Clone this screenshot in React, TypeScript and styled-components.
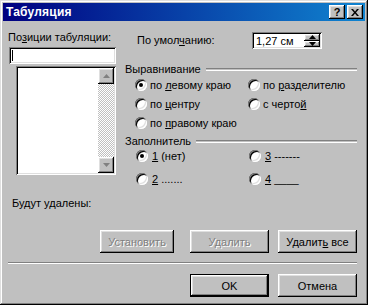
import React from 'react'
import styled, { createGlobalStyle } from 'styled-components'

const GlobalStyle = createGlobalStyle`
    html, body {
        margin: 0;
        padding: 0;
        background: #c0c0c0;
    }
    body {
        font-family: "Liberation Sans", Arial, sans-serif;
        font-size: 11px;
        color: #000;
    }
`

const raised = `
    box-shadow: inset -1px -1px 0 #000, inset 1px 1px 0 #fff, inset -2px -2px 0 #808080, inset 2px 2px 0 #dfdfdf;
`
const sunken = `
    box-shadow: inset 1px 1px 0 #808080, inset -1px -1px 0 #fff, inset 2px 2px 0 #000, inset -2px -2px 0 #dfdfdf;
`

const SWindow = styled.div`
    width: 368px;
    height: 305px;
    box-sizing: border-box;
    padding: 3px;
    background: #c0c0c0;
    box-shadow: inset -1px -1px 0 #000, inset 1px 1px 0 #dfdfdf, inset -2px -2px 0 #808080, inset 2px 2px 0 #fff;
    display: flex;
    flex-direction: column;
`

const STitleBar = styled.div`
    height: 18px;
    display: flex;
    align-items: center;
    padding: 0 2px 0 3px;
    background: linear-gradient(to right, #000080, #1084d0);
    color: #fff;
    font-weight: 700;
    font-size: 12px;
`

const STitleText = styled.div`
    flex: 1;
    letter-spacing: 0.2px;
`

const SCaptionButtons = styled.div`
    display: flex;
    gap: 2px;
`

const SCaptionButton = styled.div`
    width: 16px;
    height: 14px;
    background: #c0c0c0;
    ${raised}
    display: flex;
    align-items: center;
    justify-content: center;
    color: #000;
    font-size: 11px;
    font-weight: 700;
    line-height: 14px;
`

const SBody = styled.div`
    flex: 1;
    padding: 0 8px 0 5px;
    display: flex;
    flex-direction: column;
`

const STop = styled.div`
    display: flex;
    gap: 9px;
`

const SLeftCol = styled.div`
    width: 108px;
    display: flex;
    flex-direction: column;
`

const SLabel = styled.div`
    line-height: 13px;
    white-space: nowrap;
`

const STopLabel = styled(SLabel)`
    margin-top: 10px;
`

const STextField = styled.div`
    margin: 3px 0 0 1px;
    height: 17px;
    background: #fff;
    ${sunken}
    display: flex;
    align-items: center;
    padding-left: 3px;
`

const SCaret = styled.span`
    width: 1px;
    height: 11px;
    background: #000;
`

const SListBox = styled.div`
    margin: 2px 0 0 8px;
    height: 109px;
    background: #fff;
    ${sunken}
    box-sizing: border-box;
    padding: 2px;
    display: flex;
    justify-content: flex-end;
`

const SScrollBar = styled.div`
    width: 16px;
    display: flex;
    flex-direction: column;
    justify-content: space-between;
    background-color: #fff;
    background-image: conic-gradient(#c0c0c0 25%, #fff 25% 50%, #c0c0c0 50% 75%, #fff 75%);
    background-size: 2px 2px;
`

const SScrollButton = styled.div`
    width: 16px;
    height: 16px;
    background: #c0c0c0;
    ${raised}
    display: flex;
    align-items: center;
    justify-content: center;
`

const SRightCol = styled.div`
    flex: 1;
    display: flex;
    flex-direction: column;
`

const SDefaultRow = styled.div`
    margin-top: 11px;
    padding-left: 12px;
    display: grid;
    grid-template-columns: 115px 70px;
    align-items: center;
`

const SSpin = styled.div`
    height: 17px;
    background: #fff;
    ${sunken}
    display: flex;
    align-items: center;
    padding: 0 2px 0 4px;
`

const SSpinText = styled.span`
    flex: 1;
`

const SSpinButtons = styled.div`
    display: flex;
    flex-direction: column;
`

const SSpinButton = styled.div`
    width: 16px;
    height: 6.5px;
    background: #c0c0c0;
    ${raised}
    display: flex;
    align-items: center;
    justify-content: center;
`

const SLegend = styled.div<{ $top: number }>`
    margin-top: ${props => props.$top}px;
    display: flex;
    align-items: center;
    gap: 5px;
    line-height: 13px;
    &::after {
        content: '';
        flex: 1;
        height: 1px;
        border-top: 1px solid #808080;
        border-bottom: 1px solid #fff;
        margin-top: -1px;
    }
`

const SRadioGrid = styled.div<{ $gap: number; $indent: number }>`
    margin-top: ${props => props.$gap === 3 ? 1 : 0}px;
    padding-left: ${props => props.$indent}px;
    display: grid;
    grid-template-columns: 113px 1fr;
    row-gap: ${props => props.$gap}px;
`

const SRadioItem = styled.label`
    height: 16px;
    display: flex;
    align-items: center;
    gap: 3px;
    white-space: nowrap;
`

const SRadioCircle = styled.span<{ $checked?: boolean }>`
    width: 12px;
    height: 12px;
    border-radius: 50%;
    background: #fff;
    box-shadow: inset 1px 1px 0 #808080, inset -1px -1px 0 #fff, inset 2px 2px 0 #000, inset -2px -2px 0 #dfdfdf;
    flex: none;
    position: relative;
    &::after {
        content: '';
        display: ${props => props.$checked ? 'block' : 'none'};
        position: absolute;
        left: 4px;
        top: 4px;
        width: 4px;
        height: 4px;
        border-radius: 50%;
        background: #000;
    }
`

const SRadioText = styled.span<{ $pad?: number }>`
    padding-left: ${props => props.$pad || 0}px;
`

const SU = styled.span`
    text-decoration: underline;
    text-underline-offset: 1px;
`

const SDeleteLabel = styled(SLabel)`
    margin: 10px 0 0 4px;
`

const SButtonRow = styled.div<{ $top: number }>`
    margin-top: ${props => props.$top}px;
    display: flex;
    justify-content: flex-end;
    gap: 9px;
`

const SButton = styled.div<{ $disabled?: boolean; $default?: boolean; $width?: number; $after?: number }>`
    width: ${props => props.$width || 79}px;
    margin-right: ${props => props.$after || 0}px;
    height: 23px;
    box-sizing: border-box;
    background: #c0c0c0;
    ${raised}
    display: flex;
    align-items: center;
    justify-content: center;
    color: ${props => props.$disabled ? '#808080' : '#000'};
    text-shadow: ${props => props.$disabled ? '1px 1px 0 #fff' : 'none'};
    border: ${props => props.$default ? '1px solid #000' : 'none'};
`

const SButtonText = styled.span`
    white-space: nowrap;
`

const SSeparator = styled.div`
    margin-top: 9px;
    border-top: 1px solid #808080;
    border-bottom: 1px solid #fff;
`

const ArrowUp = ({ color = '#000' }: { color?: string }) => (
    <svg width="7" height="4" viewBox="0 0 7 4">
        <polygon points="3.5,0 7,4 0,4" fill={color} />
    </svg>
)

const ArrowDown = ({ color = '#000' }: { color?: string }) => (
    <svg width="7" height="4" viewBox="0 0 7 4">
        <polygon points="0,0 7,0 3.5,4" fill={color} />
    </svg>
)

const Radio = ({ checked, pad, children }: { checked?: boolean; pad?: number; children: React.ReactNode }) => (
    <SRadioItem>
        <SRadioCircle $checked={checked} />
        <SRadioText $pad={pad}>{children}</SRadioText>
    </SRadioItem>
)

const App = () => {
    return (
        <>
            <GlobalStyle />
            <SWindow>
                <STitleBar>
                    <STitleText>Табуляция</STitleText>
                    <SCaptionButtons>
                        <SCaptionButton>?</SCaptionButton>
                        <SCaptionButton>
                            <svg width="8" height="7" viewBox="0 0 8 7">
                                <path d="M0 0 L2 0 L4 2.5 L6 0 L8 0 L5 3.5 L8 7 L6 7 L4 4.5 L2 7 L0 7 L3 3.5 Z" fill="#000" />
                            </svg>
                        </SCaptionButton>
                    </SCaptionButtons>
                </STitleBar>
                <SBody>
                    <STop>
                        <SLeftCol>
                            <STopLabel>По<SU>з</SU>иции табуляции:</STopLabel>
                            <STextField><SCaret /></STextField>
                            <SListBox>
                                <SScrollBar>
                                    <SScrollButton><ArrowUp color="#808080" /></SScrollButton>
                                    <SScrollButton><ArrowDown color="#808080" /></SScrollButton>
                                </SScrollBar>
                            </SListBox>
                        </SLeftCol>
                        <SRightCol>
                            <SDefaultRow>
                                <SLabel>По умол<SU>ч</SU>анию:</SLabel>
                                <SSpin>
                                    <SSpinText>1,27 см</SSpinText>
                                    <SSpinButtons>
                                        <SSpinButton><ArrowUp /></SSpinButton>
                                        <SSpinButton><ArrowDown /></SSpinButton>
                                    </SSpinButtons>
                                </SSpin>
                            </SDefaultRow>
                            <SLegend $top={14}>Выравнивание</SLegend>
                            <SRadioGrid $gap={3} $indent={10}>
                                <Radio checked>по <SU>л</SU>евому краю</Radio>
                                <Radio>по <SU>р</SU>азделителю</Radio>
                                <Radio>по <SU>ц</SU>ентру</Radio>
                                <Radio>с черто<SU>й</SU></Radio>
                                <Radio>по <SU>п</SU>равому краю</Radio>
                            </SRadioGrid>
                            <SLegend $top={4}>Заполнитель</SLegend>
                            <SRadioGrid $gap={7} $indent={11}>
                                <Radio checked pad={1}><SU>1</SU> (нет)</Radio>
                                <Radio pad={1}><SU>3</SU> -------</Radio>
                                <Radio pad={1}><SU>2</SU> .......</Radio>
                                <Radio pad={1}><SU>4</SU> ____</Radio>
                            </SRadioGrid>
                        </SRightCol>
                    </STop>
                    <SDeleteLabel>Будут удалены:</SDeleteLabel>
                    <SButtonRow $top={20}>
                        <SButton $disabled $width={74} $after={7}><SButtonText>Установить</SButtonText></SButton>
                        <SButton $disabled><SButtonText>Удалить</SButtonText></SButton>
                        <SButton><SButtonText>Удалит<SU>ь</SU> все</SButtonText></SButton>
                    </SButtonRow>
                    <SSeparator />
                    <SButtonRow $top={10}>
                        <SButton $default><SButtonText>OK</SButtonText></SButton>
                        <SButton><SButtonText>Отмена</SButtonText></SButton>
                    </SButtonRow>
                </SBody>
            </SWindow>
        </>
    )
}

export default App
